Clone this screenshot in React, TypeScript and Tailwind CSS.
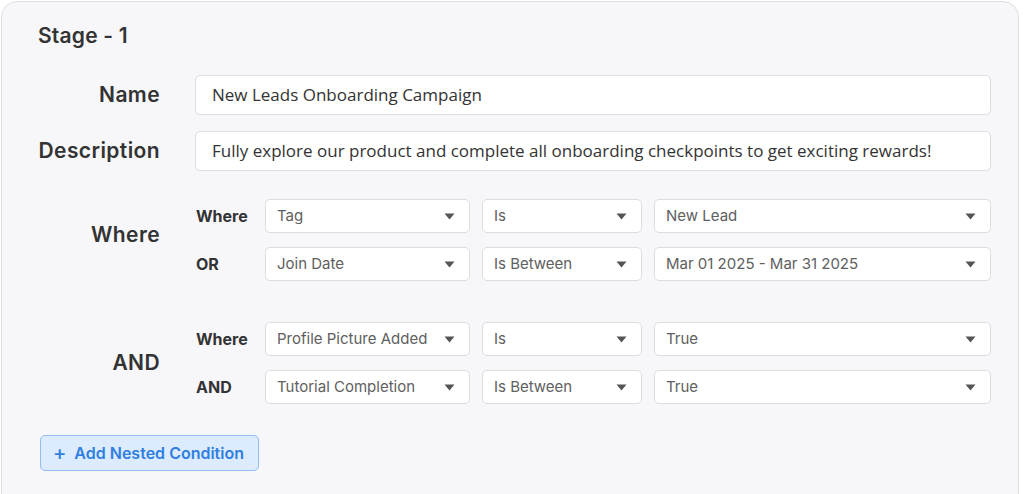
import React from 'react';

type Row = { label: string; field: string; op: string; value: string };

const groups: { label: string; rows: Row[] }[] = [
  {
    label: 'Where',
    rows: [
      { label: 'Where', field: 'Tag', op: 'Is', value: 'New Lead' },
      { label: 'OR', field: 'Join Date', op: 'Is Between', value: 'Mar 01 2025 - Mar 31 2025' },
    ],
  },
  {
    label: 'AND',
    rows: [
      { label: 'Where', field: 'Profile Picture Added', op: 'Is', value: 'True' },
      { label: 'AND', field: 'Tutorial Completion', op: 'Is Between', value: 'True' },
    ],
  },
];

function Caret() {
  return (
    <svg width="11" height="7" viewBox="0 0 11 7" className="shrink-0">
      <path d="M0.5 0.5 L10.5 0.5 L5.5 6.5 Z" fill="#555" />
    </svg>
  );
}

function Select({ value, width }: { value: string; width: string }) {
  return (
    <div className={`${width} h-[34px] flex items-center justify-between pl-[11px] pr-[14px] bg-white border border-[#dcdce2] rounded-[5px] text-[15px] text-[#606060] font-['Inter',sans-serif]`}>
      <span className="truncate">{value}</span>
      <Caret />
    </div>
  );
}

function TextField({ value }: { value: string }) {
  return (
    <div className="flex-1 h-[40px] flex items-center px-[16px] bg-white border border-[#dcdce2] rounded-[5px] text-[17px] text-[#333] font-['Open_Sans',sans-serif]">
      {value}
    </div>
  );
}

export default function App() {
  return (
    <div className="w-[1024px] h-[494px] bg-white overflow-hidden font-['Inter',sans-serif]">
      <div className="ml-[1px] mt-[1px] w-[1018px] h-[520px] bg-[#f7f7fa] border border-[#dedee4] rounded-tl-[16px] rounded-tr-[16px] pl-[36px] pr-[27px]">
        <h2 className="pt-[20px] h-[62px] text-[21px] font-semibold text-[#333] leading-[28px] tracking-[0.2px]">Stage - 1</h2>

        <div className="flex items-center h-[40px] mt-[11px]">
          <div className="w-[122px] text-right text-[21px] font-semibold text-[#333] tracking-[0.4px]">Name</div>
          <div className="ml-[35px] flex-1 flex"><TextField value="New Leads Onboarding Campaign" /></div>
        </div>
        <div className="flex items-center h-[40px] mt-[16px]">
          <div className="w-[122px] text-right text-[21px] font-semibold text-[#333] tracking-[0.4px] whitespace-nowrap">Description</div>
          <div className="ml-[35px] flex-1 flex">
            <TextField value="Fully explore our product and complete all onboarding checkpoints to get exciting rewards!" />
          </div>
        </div>

        <div className="flex flex-col gap-[41px] mt-[28px]">
          {groups.map((g, i) => (
            <div key={g.label} className="flex items-center">
              <div className={`w-[122px] text-right text-[21px] font-semibold text-[#333] tracking-[0.4px] ${i === 0 ? 'mb-[10px]' : ''}`}>{g.label}</div>
              <div className="ml-[36px] flex-1 flex flex-col gap-[14px]">
                {g.rows.map((r) => (
                  <div key={r.label + r.field} className="flex items-center">
                    <div className="w-[69px] text-[16px] font-bold text-[#333]">{r.label}</div>
                    <div className="flex-1 flex gap-[12px]">
                      <Select value={r.field} width="w-[205px]" />
                      <Select value={r.op} width="w-[160px]" />
                      <Select value={r.value} width="flex-1" />
                    </div>
                  </div>
                ))}
              </div>
            </div>
          ))}
        </div>

        <button className="mt-[31px] ml-[2px] h-[36px] pl-[12px] pr-[14px] flex items-center gap-[8px] bg-[#dcebfd] border border-[#92bdf0] rounded-[5px] text-[16px] font-semibold text-[#2f7fe0]">
          <span className="text-[20px] font-medium leading-none">+</span>
          <span>Add Nested Condition</span>
        </button>
      </div>
    </div>
  );
}
